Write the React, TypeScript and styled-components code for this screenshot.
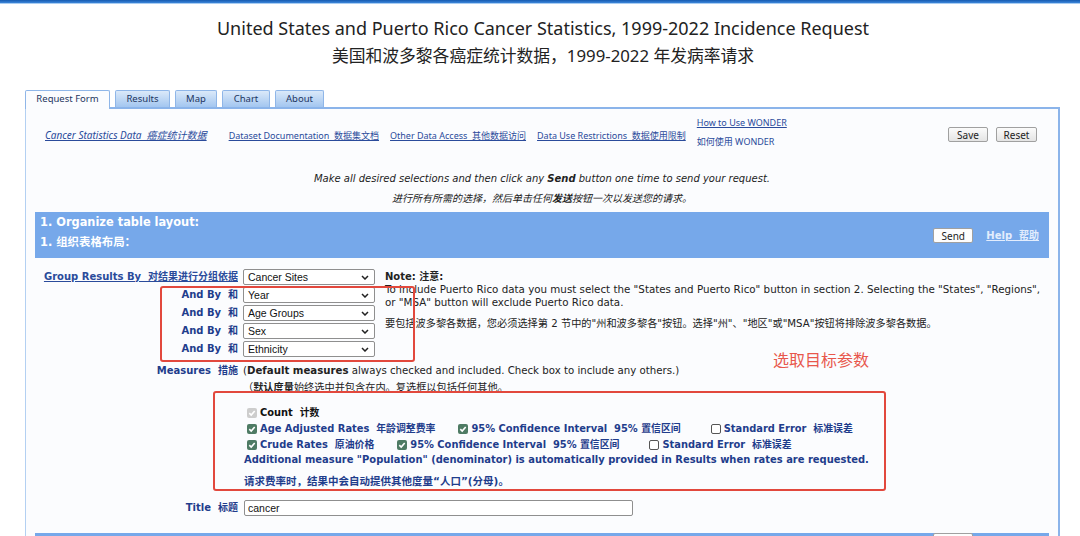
import React from "react";
import styled, { createGlobalStyle } from "styled-components";

const SANS = `"DejaVu Sans", "Noto Sans CJK SC", sans-serif`;
const NARROW = `"Noto Sans", "Noto Sans CJK SC", sans-serif`;
const ARIAL = `"Liberation Sans", "Noto Sans CJK SC", sans-serif`;
const CJK = `"Noto Sans", "Noto Sans CJK SC", sans-serif`;
const NAVY = "#1f3d8c";
const LINK = "#2a4b9b";
const BAR = "#76a8ea";
const EDGE = "#8bb4ea";
const RED = "#e2483d";

const Global = createGlobalStyle`
  html, body { margin: 0; padding: 0; background: #fff; }
  body { font-family: ${SANS}; color: #222; overflow: hidden; }
  * { box-sizing: border-box; }
`;

const Page = styled.div`
  position: relative;
  width: 1080px;
  height: 536px;
  overflow: hidden;
`;

const TopBar = styled.div`
  height: 4px;
  background: linear-gradient(#155ab0, #3c86da);
  border-bottom: 1px solid #a9cdf2;
`;

const Header = styled.header`
  padding: 13px 0 0 6px;
  text-align: center;
`;

const Title = styled.h1`
  margin: 0;
  font: 400 18px/22px ${NARROW};
  color: #222;
`;

const SubTitle = styled.h2`
  margin: 6px 0 0;
  font: 400 16.8px/22px ${CJK};
  color: #222;
`;

const Tabs = styled.nav`
  display: flex;
  align-items: flex-end;
  gap: 5px;
  margin: 23px 0 0 25px;
  position: relative;
  z-index: 1;
`;

const Tab = styled.div<{ $active?: boolean; $w: number }>`
  width: ${(p) => p.$w}px;
  height: ${(p) => (p.$active ? 19 : 17)}px;
  margin-bottom: ${(p) => (p.$active ? -2 : 0)}px;
  padding-bottom: ${(p) => (p.$active ? 2 : 0)}px;
  display: flex;
  align-items: center;
  justify-content: center;
  font: 400 9.5px/1 ${NARROW};
  color: #1d355f;
  border: 1px solid #8fb6e8;
  border-bottom: none;
  border-radius: 2px 2px 0 0;
  background: ${(p) => (p.$active ? "#fbfcfe" : "linear-gradient(#dbe9f9, #a3c6f0)")};
`;

const Panel = styled.main`
  margin-left: 25px;
  width: 1035px;
  border-top: 2px solid ${EDGE};
  border-left: 1px solid #b3d0f2;
  border-right: 2px solid ${EDGE};
  background: #fbfcfe;
  padding-bottom: 40px;
`;

const LinkBar = styled.div`
  display: flex;
  align-items: flex-start;
  height: 42px;
  padding: 4px 21px 0 19px;
`;

const Links = styled.div`
  display: flex;
  align-items: flex-start;
  gap: 11px;
`;

const TopLink = styled.a<{ $italic?: boolean }>`
  margin-top: 12.5px;
  margin-right: ${(p) => (p.$italic ? 11 : 0)}px;
  font: ${(p) => (p.$italic ? "italic 400 10px" : "normal 400 9px")}/19px ${NARROW};
  color: ${LINK};
  text-decoration: underline;
  white-space: pre;
`;

const HowTo = styled.div`
  display: flex;
  flex-direction: column;
  font: 400 9px/19px ${NARROW};
  color: ${LINK};
  white-space: pre;
`;

const HowToLink = styled.a`
  color: ${LINK};
  text-decoration: underline;
`;

const ButtonGroup = styled.div`
  display: flex;
  gap: 8px;
  margin: 14px 0 0 auto;
`;

const Button = styled.button<{ $w: number; $plain?: boolean }>`
  width: ${(p) => p.$w}px;
  height: 15px;
  padding: 0;
  font: 400 10px/1 ${NARROW};
  color: #222;
  border: 1px solid #a0a0a0;
  border-radius: 2px;
  background: ${(p) => (p.$plain ? "#fdfdfd" : "linear-gradient(#fbfbfb, #e4e4e4)")};
`;

const Instructions = styled.div`
  margin-top: 18px;
  text-align: center;
  color: #222;
`;

const InstrLine = styled.p`
  margin: 0;
  font: italic 400 10px/20px ${SANS};
`;

const SectionBar = styled.section<{ $top: number }>`
  margin: ${(p) => p.$top}px 9px 0;
  height: 46px;
  background: ${BAR};
  display: flex;
  justify-content: space-between;
  align-items: flex-start;
  padding: 0 10px 0 5px;
`;

const SectionTitle = styled.div`
  color: #fff;
  font: 700 11.4px/20px ${SANS};
`;

const SectionActions = styled.div<{ $top: number; $right?: number }>`
  display: flex;
  align-items: center;
  gap: 13px;
  margin-top: ${(p) => p.$top}px;
  margin-right: ${(p) => p.$right ?? 0}px;
`;

const HelpLink = styled.a`
  font: 700 10px/15px ${SANS};
  color: #e3edfd;
  text-decoration: underline;
  white-space: pre;
`;

const FormArea = styled.div`
  padding-top: 11px;
`;

const GroupGrid = styled.div`
  display: grid;
  grid-template-columns: 212px 132px 1fr;
  column-gap: 5px;
  row-gap: 2px;
  grid-auto-rows: 16px;
`;

const Label = styled.div<{ $link?: boolean }>`
  text-align: right;
  font: 700 10px/16px ${SANS};
  color: ${(p) => (p.$link ? LINK : NAVY)};
  text-decoration: ${(p) => (p.$link ? "underline" : "none")};
  white-space: pre;
`;

const SelectBox = styled.div`
  display: flex;
  align-items: center;
  justify-content: space-between;
  height: 16px;
  padding: 0 5px 0 4px;
  background: #fff;
  border: 1px solid #8f8f8f;
  border-radius: 2px;
  font: 400 10.5px/1 ${ARIAL};
  color: #111;
`;

const Note = styled.div`
  grid-column: 3;
  grid-row: 1 / span 5;
  padding-left: 5px;
  white-space: nowrap;
  color: #222;
`;

const NoteHead = styled.div`
  font: 700 10px/16px ${SANS};
`;

const NoteText = styled.p<{ $cn?: boolean }>`
  margin: ${(p) => (p.$cn ? "8px" : "-2px")} 0 0;
  font: 400 ${(p) => (p.$cn ? "10.2px" : "10.3px")}/13px ${SANS};
`;

const FieldRow = styled.div<{ $top: number; $center?: boolean }>`
  display: grid;
  grid-template-columns: 212px 1fr;
  column-gap: 5px;
  align-items: ${(p) => (p.$center ? "center" : "start")};
  margin-top: ${(p) => p.$top}px;
`;

const MeasureLabel = styled(Label)`
  line-height: 14px;
`;

const Intro = styled.p<{ $cn?: boolean }>`
  margin: ${(p) => (p.$cn ? "3px" : "0")} 0 0;
  font: 400 10.2px/14px ${SANS};
  color: #222;
  white-space: nowrap;
`;

const MeasureBox = styled.div`
  margin-top: 10px;
`;

const CheckRow = styled.div`
  display: flex;
  align-items: center;
  height: 16px;
  padding-left: 4px;
`;

const CheckItem = styled.label<{ $dark?: boolean; $gap?: number }>`
  display: inline-flex;
  align-items: center;
  gap: 3px;
  margin-right: ${(p) => p.$gap ?? 23}px;
  font: 700 9.9px/16px ${SANS};
  color: ${(p) => (p.$dark ? "#111" : NAVY)};
  white-space: pre;
`;

const Box = styled.span<{ $state: "on" | "off" | "disabled" }>`
  width: 10px;
  height: 10px;
  flex: none;
  display: inline-flex;
  align-items: center;
  justify-content: center;
  border-radius: 2px;
  background: ${(p) =>
    p.$state === "on" ? "#4e7b64" : p.$state === "disabled" ? "#cdcdcd" : "#fff"};
  border: ${(p) => (p.$state === "off" ? "1px solid #555" : "none")};
`;

const Additional = styled.p<{ $cn?: boolean }>`
  margin: ${(p) => (p.$cn ? "5px" : "0")} 0 0 1px;
  font: 700 ${(p) => (p.$cn ? "10.5px" : "9.95px")}/${(p) => (p.$cn ? 18 : 14)}px ${SANS};
  color: ${NAVY};
  white-space: nowrap;
`;

const TextInput = styled.input`
  width: 389px;
  height: 16px;
  margin-left: 1px;
  padding: 0 3px;
  border: 1px solid #8f8f8f;
  border-radius: 2px;
  background: #fff;
  font: 400 10.5px/1 ${ARIAL};
  color: #111;
`;

const AnnotBox = styled.div<{ $x: number; $y: number; $w: number; $h: number }>`
  position: absolute;
  left: ${(p) => p.$x}px;
  top: ${(p) => p.$y}px;
  width: ${(p) => p.$w}px;
  height: ${(p) => p.$h}px;
  border: 2px solid ${RED};
  border-radius: 3px;
  pointer-events: none;
`;

const AnnotText = styled.div`
  position: absolute;
  left: 773px;
  top: 349px;
  font: 400 16px/20px "Noto Sans CJK SC", sans-serif;
  color: #e8574c;
`;

const Chevron = () => (
  <svg width="8" height="5" viewBox="0 0 8 5">
    <path d="M1 1 L4 4 L7 1" stroke="#222" strokeWidth="1.5" fill="none" />
  </svg>
);

type CheckState = "on" | "off" | "disabled";

const Check = ({ state }: { state: CheckState }) => (
  <Box $state={state}>
    {state !== "off" && (
      <svg width="8" height="8" viewBox="0 0 8 8">
        <path d="M1.3 4.2 L3.2 6 L6.7 1.9" stroke="#fff" strokeWidth="1.6" fill="none" />
      </svg>
    )}
  </Box>
);

const Select = ({ value }: { value: string }) => (
  <SelectBox>
    <span>{value}</span>
    <Chevron />
  </SelectBox>
);

const groups = ["Year", "Age Groups", "Sex", "Ethnicity"];

const measureRows: { label: string; state: CheckState; gap?: number }[][] = [
  [
    { label: "Age Adjusted Rates  年龄调整费率", state: "on" },
    { label: "95% Confidence Interval  95% 置信区间", state: "on", gap: 30 },
    { label: "Standard Error  标准误差", state: "off" },
  ],
  [
    { label: "Crude Rates  原油价格", state: "on" },
    { label: "95% Confidence Interval  95% 置信区间", state: "on", gap: 30 },
    { label: "Standard Error  标准误差", state: "off" },
  ],
];

export default function App() {
  return (
    <Page>
      <Global />
      <TopBar />
      <Header>
        <Title>United States and Puerto Rico Cancer Statistics, 1999-2022 Incidence Request</Title>
        <SubTitle>美国和波多黎各癌症统计数据，1999-2022 年发病率请求</SubTitle>
      </Header>
      <Tabs>
        <Tab $active $w={85}>Request Form</Tab>
        <Tab $w={55}>Results</Tab>
        <Tab $w={42}>Map</Tab>
        <Tab $w={48}>Chart</Tab>
        <Tab $w={49}>About</Tab>
      </Tabs>
      <Panel>
        <LinkBar>
          <Links>
            <TopLink $italic>Cancer Statistics Data  癌症统计数据</TopLink>
            <TopLink>Dataset Documentation  数据集文档</TopLink>
            <TopLink>Other Data Access  其他数据访问</TopLink>
            <TopLink>Data Use Restrictions  数据使用限制</TopLink>
            <HowTo>
              <HowToLink>How to Use WONDER</HowToLink>
              <span>如何使用 WONDER</span>
            </HowTo>
          </Links>
          <ButtonGroup>
            <Button $w={40}>Save</Button>
            <Button $w={41}>Reset</Button>
          </ButtonGroup>
        </LinkBar>
        <Instructions>
          <InstrLine>
            Make all desired selections and then click any <b>Send</b> button one time to send your request.
          </InstrLine>
          <InstrLine>
            进行所有所需的选择，然后单击任何<b>发送</b>按钮一次以发送您的请求。
          </InstrLine>
        </Instructions>
        <SectionBar $top={3}>
          <div>
            <SectionTitle>1. Organize table layout:</SectionTitle>
            <SectionTitle>1. 组织表格布局：</SectionTitle>
          </div>
          <SectionActions $top={16}>
            <Button $w={40} $plain>Send</Button>
            <HelpLink>Help  帮助</HelpLink>
          </SectionActions>
        </SectionBar>
        <FormArea>
          <GroupGrid>
            <Label $link>Group Results By  对结果进行分组依据</Label>
            <Select value="Cancer Sites" />
            <Note>
              <NoteHead>Note:  注意:</NoteHead>
              <NoteText>
                To include Puerto Rico data you must select the "States and Puerto Rico" button in section 2. Selecting the "States", "Regions",
                <br />
                or "MSA" button will exclude Puerto Rico data.
              </NoteText>
              <NoteText $cn>
                要包括波多黎各数据，您必须选择第 2 节中的"州和波多黎各"按钮。选择"州"、"地区"或"MSA"按钮将排除波多黎各数据。
              </NoteText>
            </Note>
            {groups.map((g) => (
              <React.Fragment key={g}>
                <Label>And By  和</Label>
                <Select value={g} />
              </React.Fragment>
            ))}
          </GroupGrid>
          <FieldRow $top={7}>
            <MeasureLabel>Measures  措施</MeasureLabel>
            <div>
              <Intro>
                (<b>Default measures</b> always checked and included. Check box to include any others.)
              </Intro>
              <Intro $cn>
                （<b>默认度量</b>始终选中并包含在内。复选框以包括任何其他。
              </Intro>
              <MeasureBox>
                <CheckRow>
                  <CheckItem $dark>
                    <Check state="disabled" />
                    Count  计数
                  </CheckItem>
                </CheckRow>
                {measureRows.map((row, i) => (
                  <CheckRow key={i}>
                    {row.map((m) => (
                      <CheckItem key={m.label} $gap={m.gap}>
                        <Check state={m.state} />
                        {m.label}
                      </CheckItem>
                    ))}
                  </CheckRow>
                ))}
                <Additional>
                  Additional measure "Population" (denominator) is automatically provided in Results when rates are requested.
                </Additional>
                <Additional $cn>请求费率时，结果中会自动提供其他度量“人口”(分母)。</Additional>
              </MeasureBox>
            </div>
          </FieldRow>
          <FieldRow $top={10} $center>
            <Label>Title  标题</Label>
            <TextInput defaultValue="cancer" />
          </FieldRow>
        </FormArea>
        <SectionBar $top={17}>
          <div />
          <SectionActions $top={0} $right={66}>
            <Button $w={40} $plain aria-label="Send" />
          </SectionActions>
        </SectionBar>
      </Panel>
      <AnnotBox $x={160} $y={286} $w={255} $h={76} />
      <AnnotBox $x={213} $y={391} $w={673} $h={100} />
      <AnnotText>选取目标参数</AnnotText>
    </Page>
  );
}
